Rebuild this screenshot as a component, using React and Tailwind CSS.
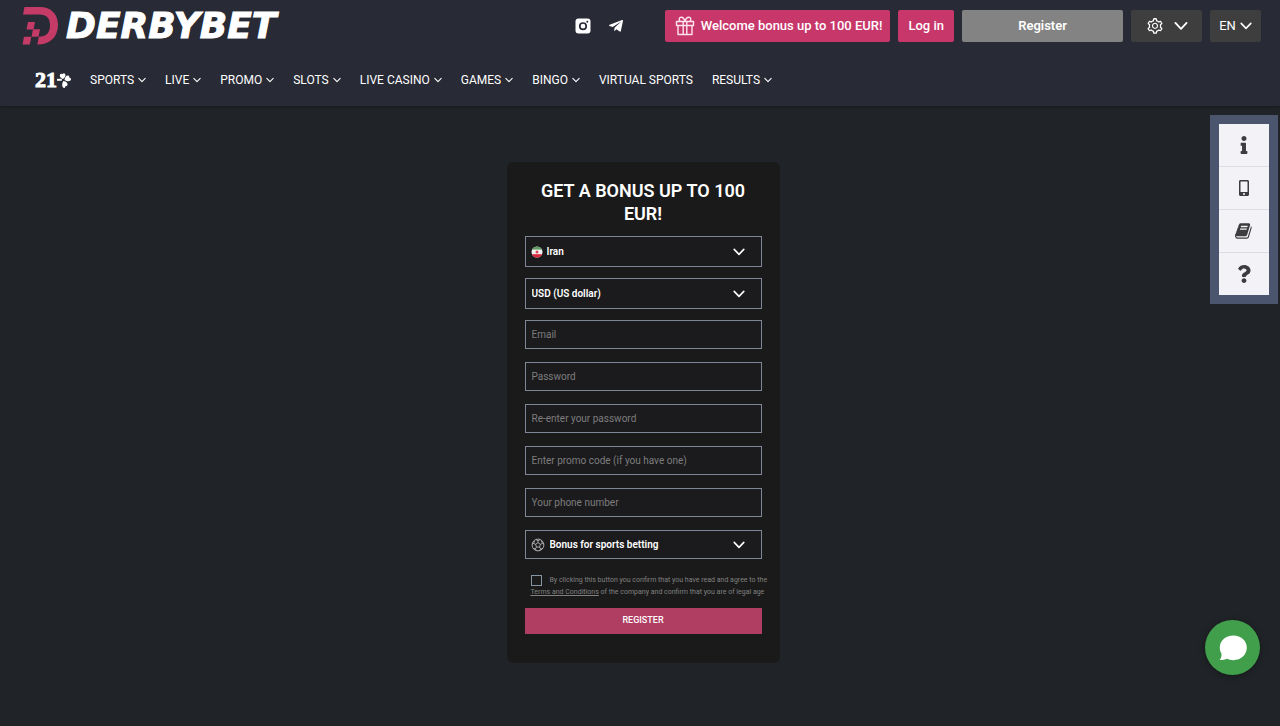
import { useState } from 'react';
import { AiOutlineSetting } from 'react-icons/ai';
import { FaInfo, FaMobileAlt, FaQuestion, FaTelegramPlane } from 'react-icons/fa';

const navItems = [
    { label: 'SPORTS', menu: true },
    { label: 'LIVE', menu: true },
    { label: 'PROMO', menu: true },
    { label: 'SLOTS', menu: true },
    { label: 'LIVE CASINO', menu: true },
    { label: 'GAMES', menu: true },
    { label: 'BINGO', menu: true },
    { label: 'VIRTUAL SPORTS', menu: false },
    { label: 'RESULTS', menu: true },
];

const textFields = [
    { id: 'email', type: 'email', label: 'Email' },
    { id: 'password', type: 'password', label: 'Password' },
    { id: 'password2', type: 'password', label: 'Re-enter your password' },
    { id: 'promo', type: 'text', label: 'Enter promo code (if you have one)' },
    { id: 'phone', type: 'tel', label: 'Your phone number' },
];

function Chevron({ className }) {
    return (
        <svg viewBox="0 0 12 8" fill="none" stroke="currentColor" strokeWidth="1.6" strokeLinecap="round" strokeLinejoin="round" className={className}>
            <path d="M1.2 1.4 6 6.4l4.8-5" />
        </svg>
    );
}

function LogoMark() {
    return (
        <svg viewBox="0 0 36 38" className="w-9 h-[38px] shrink-0" fill="#c43b68">
            <path d="M2.500 0H18C29 0 36 7 36 18C36 30 28 37.500 15.300 37.500L16.800 29.800C24.500 29.500 28 25.500 28 18.500C28 11 24.500 7.500 17.500 7.500H1Z" />
            <path d="M6 15h7l-1.500 7.500h-7z" />
            <path d="M11 22.300h7l-1.500 7.500H9.500z" />
            <path d="M2 29.800h7.300l-1.500 7.700H.500z" />
        </svg>
    );
}

function Clover() {
    return (
        <svg viewBox="0 0 14 16" className="w-3.5 h-4" fill="#fff">
            <path d="M5.800 7C2.800 5.800 2 3 3.600 2c1-.5 1.900.3 1.900.3s.8-1.400 2-.8C9.300 2.500 8.400 5.800 5.800 7z" />
            <path d="M7.500 8c.2-3.200 2.600-5.200 4.200-4.200.9.800.6 1.900.6 1.900s1.600-.1 1.700 1.200C14.200 9.200 11 10.200 7.500 8z" />
            <path d="M6.300 9c3.200.2 5 2.700 4 4.400-.7.900-1.700.7-1.700.7s0 1.700-1.300 1.800c-2.200.1-2.900-3.600-1-6.900z" />
            <path d="M0 6.800h4.800v2H0z" />
        </svg>
    );
}

function Instagram() {
    return (
        <svg viewBox="0 0 16 16" className="w-4 h-4" fill="none">
            <rect x="0.500" y="0.500" width="15" height="15" rx="3" fill="#fff" />
            <circle cx="8" cy="8.200" r="3.200" stroke="#282a35" strokeWidth="1.700" />
            <circle cx="12.300" cy="3.700" r="1" fill="#282a35" />
        </svg>
    );
}

function Gift() {
    return (
        <svg viewBox="0 0 20 20" className="w-5 h-5" fill="none" stroke="#ffe3ec" strokeWidth="1.400" strokeLinejoin="round">
            <path d="M1.500 5.500h17v4h-17zM3 9.500h14v9H3zM8.200 5.500v13M11.800 5.500v13" />
            <path d="M9.800 5.500C9.300 2.500 7.800 1.200 6.200 1.200C4 1.200 3.500 4 5.200 5.500M10.200 5.500c.5-3 2-4.300 3.600-4.300c2.200 0 2.700 2.800 1 4.300" />
        </svg>
    );
}

function Book() {
    return (
        <svg viewBox="0 0 1792 1792" className="w-[18px] h-[18px]" fill="currentColor">
            <path d="M1639 478q40 57 18 129l-275 906q-19 64-76.500 107.500t-122.500 43.500h-923q-77 0-148.500-53.500t-99.500-131.500q-24-67-2-127 0-4 3-27t4-37q1-8-3-21.500t-3-19.500q2-11 8-21t16.500-23.500 16.500-23.500q23-38 45-91.500t30-91.500q3-10 .5-30t-.5-28q3-11 17-28t17-23q21-36 42-92t25-90q1-9-2.500-32t.5-28q4-13 22-30.500t22-22.500q19-26 42.500-84.500t27.500-96.500q1-8-3-25.500t-2-26.500q2-8 9-18t18-23 17-21q8-12 16.500-30.500t15-35 16-36 19.500-32 26.500-23.500 36-11.500 47.500 5.500l-1 3q38-9 51-9h761q74 0 114 56t18 130l-274 906q-36 119-71.500 153.500t-128.500 34.500h-869q-27 0-38 15-11 16-1 43 24 70 144 70h923q29 0 56-15.500t35-41.500l300-987q7-22 5-57 38 15 59 43zm-1064 2q-4 13 2 22.500t20 9.500h608q13 0 25.500-9.500t16.500-22.500l21-64q4-13-2-22.500t-20-9.500h-608q-13 0-25.500 9.500t-16.500 22.500zm-83 256q-4 13 2 22.500t20 9.500h608q13 0 25.500-9.500t16.500-22.500l21-64q4-13-2-22.500t-20-9.500h-608q-13 0-25.500 9.500t-16.500 22.500z" />
        </svg>
    );
}

function IranFlag() {
    return (
        <svg viewBox="0 0 12 12" className="w-3 h-3">
            <clipPath id="flag-round"><circle cx="6" cy="6" r="5.500" /></clipPath>
            <g clipPath="url(#flag-round)">
                <rect width="12" height="12" fill="#f2f2f2" />
                <rect width="12" height="3.600" fill="#5f9b62" />
                <rect y="8.200" width="12" height="4" fill="#d8273c" />
                <circle cx="6" cy="5.900" r="1.500" fill="#dd4455" />
            </g>
        </svg>
    );
}

function Ball() {
    return (
        <svg viewBox="0 0 14 14" className="w-3.5 h-3.5" fill="none" stroke="#b4b4b4" strokeWidth="0.900">
            <circle cx="7" cy="7" r="5.900" />
            <path d="M7 4.600 9.400 6.300 8.500 9.100h-3L4.600 6.300zM7 4.600V2.700M9.400 6.300l2-.8M8.500 9.100l1.300 1.800M5.500 9.100l-1.300 1.800M4.600 6.300l-2-.8M4.800 1.500 7 2.700l2.200-1.200M12.800 6l-1.400-.5-.9-2.700M11.800 10.500l-2 .4-1.700 1.900M2.200 10.500l2 .4 1.700 1.900M1.200 6l1.400-.5.9-2.700" />
        </svg>
    );
}

function SelectField({ label, option, icon, className, selectClass }) {
    return (
        <div className={`relative ${className}`}>
            {icon && <span className="absolute left-1.5 top-1/2 -translate-y-1/2 pointer-events-none">{icon}</span>}
            <select
                aria-label={label}
                className={`block w-full h-full appearance-none border border-[#7f8796] bg-[#1b1b1d] text-[10px] font-semibold text-white outline-none ${selectClass}`}
            >
                <option>{option}</option>
            </select>
            <Chevron className="absolute right-[17px] top-1/2 -translate-y-1/2 w-3 h-2 text-white pointer-events-none" />
        </div>
    );
}

export default function App() {
    const [agree, setAgree] = useState(false);

    return (
        <div className="min-h-screen bg-[#202428] font-[Roboto,sans-serif] text-white">
            <header className="bg-[#282a35] pb-1 shadow-[0_1px_3px_rgba(0,0,0,0.3)]">
                <div className="flex items-center pl-[22px] pr-[19px] h-[52px]">
                    <a href="#" aria-label="DerbyBet" className="flex items-center gap-2">
                        <LogoMark />
                        <span className="font-[DejaVu_Sans,sans-serif] font-bold italic text-[36px] leading-9 [-webkit-text-stroke:1px_#fff]">DERBYBET</span>
                    </a>
                    <div className="ml-auto flex items-center">
                        <div className="flex items-center gap-[17px] mr-[41px]">
                            <a href="#" aria-label="Instagram"><Instagram /></a>
                            <a href="#" aria-label="Telegram"><FaTelegramPlane className="w-4 h-4" /></a>
                        </div>
                        <div className="flex gap-2 text-[13px] font-medium">
                            <button className="h-8 pl-2.5 pr-2 flex items-center gap-1.5 rounded-xs bg-[#c7376a] whitespace-nowrap">
                                <Gift />
                                Welcome bonus up to 100 EUR!
                            </button>
                            <button className="h-8 px-2.5 rounded-xs bg-[#c7376a] whitespace-nowrap">Log in</button>
                            <button className="h-8 w-[161px] rounded-xs bg-[#838383] font-semibold">Register</button>
                            <button aria-label="Settings" className="h-8 w-[71px] flex items-center justify-center gap-2.5 rounded-xs bg-[#3e3e3f]">
                                <AiOutlineSetting className="w-[18px] h-[18px]" />
                                <Chevron className="w-3.5 h-2.5" />
                            </button>
                            <button className="h-8 w-[51px] flex items-center justify-center gap-1 rounded-xs bg-[#3e3e3f] font-normal">
                                EN
                                <Chevron className="w-3 h-2" />
                            </button>
                        </div>
                    </div>
                </div>
                <nav className="flex items-center gap-[19px] h-[45px] mt-[5px] pl-[35px] pr-5 text-xs whitespace-nowrap">
                    <a href="#" aria-label="21 games" className="flex items-center">
                        <span className="font-[Liberation_Serif,serif] font-bold text-[22px] leading-5 [-webkit-text-stroke:1px_#fff]">21</span>
                        <Clover />
                    </a>
                    {navItems.map(item => (
                        <a key={item.label} href="#" className="flex items-center gap-1">
                            {item.label}
                            {item.menu && <Chevron className="w-2 h-1.5" />}
                        </a>
                    ))}
                </nav>
            </header>

            <main className="flex justify-center pt-14 pb-14 pl-1.5">
                <form className="w-[273px] rounded-md bg-[#1a1a1a] px-[18px] pt-[17px] pb-[29px]" onSubmit={e => e.preventDefault()}>
                    <h1 className="text-center text-lg leading-[23px] font-semibold mb-[11px]">GET A BONUS UP TO 100 EUR!</h1>

                    <SelectField label="Country" option="Iran" icon={<IranFlag />} className="h-[31px] mb-[11px]" selectClass="pl-[21px]" />
                    <SelectField label="Currency" option="USD (US dollar)" className="h-[31px] mb-[11px]" selectClass="pl-1.5" />

                    {textFields.map(f => (
                        <input
                            key={f.id}
                            id={f.id}
                            type={f.type}
                            placeholder={f.label}
                            aria-label={f.label}
                            className="block w-full h-[29px] mb-[13px] px-1.5 border border-[#7f8796] bg-[#1b1b1d] text-[10px] placeholder:text-[#7d7d7d] outline-none"
                        />
                    ))}

                    <SelectField label="Bonus" option="Bonus for sports betting" icon={<Ball />} className="h-[29px]" selectClass="pl-6" />

                    <div className="mt-[15px] mb-2.5 pl-1.5 text-[7px] leading-3 text-[#808080] whitespace-nowrap">
                        <input
                            id="agree"
                            type="checkbox"
                            checked={agree}
                            onChange={() => setAgree(!agree)}
                            className="appearance-none w-[11px] h-[11px] mr-2 align-middle border border-[#8494a0] checked:bg-[#b03d62]"
                        />
                        <label htmlFor="agree">By clicking this button you confirm that you have read and agree to the</label>
                        <br />
                        <a href="#" className="underline">Terms and Conditions</a> of the company and confirm that you are of legal age
                    </div>

                    <button type="submit" className="block w-full h-[26px] bg-[#b03d62] text-[9px] font-medium">REGISTER</button>
                </form>
            </main>

            <aside className="fixed right-[2px] top-[115px] bg-[#4b556d] p-[9px]">
                <div className="flex flex-col gap-px w-[50px] bg-[#dcdde3] text-[#3d3d3f]">
                    <button aria-label="Information" className="h-[42px] flex items-center justify-center bg-[#f2f2f7]"><FaInfo className="w-[18px] h-[18px]" /></button>
                    <button aria-label="Mobile app" className="h-[42px] flex items-center justify-center bg-[#f2f2f7]"><FaMobileAlt className="w-4 h-4" /></button>
                    <button aria-label="Rules" className="h-[42px] flex items-center justify-center bg-[#f2f2f7]"><Book /></button>
                    <button aria-label="Help" className="h-[42px] flex items-center justify-center bg-[#f2f2f7]"><FaQuestion className="w-[18px] h-[18px]" /></button>
                </div>
            </aside>

            <button aria-label="Chat" className="fixed right-5 bottom-[51px] w-[55px] h-[55px] rounded-full bg-[#419f4b] flex items-center justify-center shadow-[0_1px_6px_rgba(0,0,0,0.4)]">
                <svg viewBox="0 0 28 26" className="w-7 h-[26px]" fill="#fff">
                    <path d="M14.300 .500C22 .500 27.800 5.500 27.800 12.600C27.800 20 22 25.200 14.300 25.200C11.800 25.200 9.800 24.700 8 23.800C5.500 25 3 25.200 .700 25C2.300 23.200 2.700 21.200 2.400 18.600C1.300 16.800 .800 14.800 .800 12.600C.800 5.500 6.600 .500 14.300 .500Z" />
                </svg>
            </button>
        </div>
    );
}
